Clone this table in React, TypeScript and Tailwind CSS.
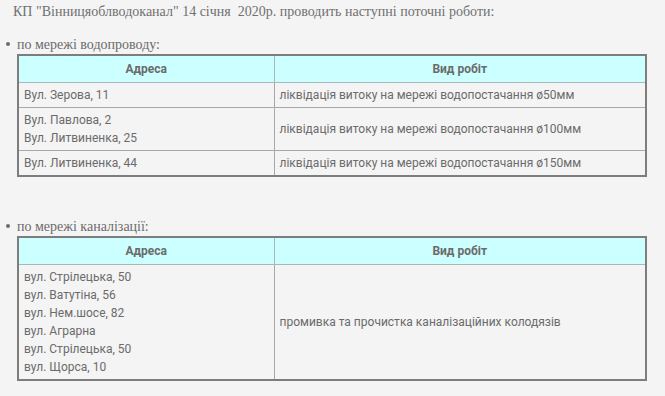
const water = [
  { addr: ['Вул. Зерова, 11'], work: 'ліквідація витоку на мережі водопостачання ø50мм' },
  { addr: ['Вул. Павлова, 2', 'Вул. Литвиненка, 25'], work: 'ліквідація витоку на мережі водопостачання ø100мм' },
  { addr: ['Вул. Литвиненка, 44'], work: 'ліквідація витоку на мережі водопостачання ø150мм' },
]

const sewer = [
  {
    addr: [
      'вул. Стрілецька, 50',
      'вул. Ватутіна, 56',
      'вул. Нем.шосе, 82',
      'вул. Аграрна',
      'вул. Стрілецька, 50',
      'вул. Щорса, 10',
    ],
    work: 'промивка та прочистка каналізаційних колодязів',
  },
]

function WorkTable({ rows }: { rows: { addr: string[]; work: string }[] }) {
  return (
    <table className="ml-[17px] w-[630px] border-collapse border-2 border-[#7d7d7d] font-['Roboto',sans-serif] text-[12px] leading-[18px] text-[#6b6b6b]">
      <thead className="bg-[#ccffff]">
        <tr>
          <th className="w-[256px] border border-[#a9b9b9] px-[5px] py-[4px] text-center font-bold">
            Адреса
          </th>
          <th className="border border-[#a9b9b9] px-[5px] py-[4px] text-center font-bold">
            Вид робіт
          </th>
        </tr>
      </thead>
      <tbody>
        {rows.map((row, i) => (
          <tr key={i}>
            <td className="border border-[#a8a8a8] px-[5px] py-[3px] align-middle">
              {row.addr.map((a, j) => (
                <div key={j}>{a}</div>
              ))}
            </td>
            <td className="border border-[#a8a8a8] px-[5px] py-[3px] align-middle">{row.work}</td>
          </tr>
        ))}
      </tbody>
    </table>
  )
}

function Bullet({ children }: { children: string }) {
  return (
    <div className="flex h-[20px] items-center font-['Liberation_Serif',serif] text-[14px] text-[#6b6b6b]">
      <span className="ml-[6px] mr-[7px] h-[4px] w-[4px] rounded-full bg-[#6b6b6b]" />
      {children}
    </div>
  )
}

export default function App() {
  return (
    <div className="h-[396px] w-[665px] overflow-hidden bg-[#f4f4f4]">
      <div className="h-[24px] pl-[13px] font-['Liberation_Serif',serif] text-[14px] leading-[24px] text-[#707070]">
        КП "Вінницяоблводоканал" 14 січня&nbsp; 2020р. проводить наступні поточні роботи:
      </div>
      <div className="mt-[10px]">
        <Bullet>по мережі водопроводу:</Bullet>
        <WorkTable rows={water} />
      </div>
      <div className="mt-[39px]">
        <Bullet>по мережі каналізації:</Bullet>
        <WorkTable rows={sewer} />
      </div>
    </div>
  )
}
